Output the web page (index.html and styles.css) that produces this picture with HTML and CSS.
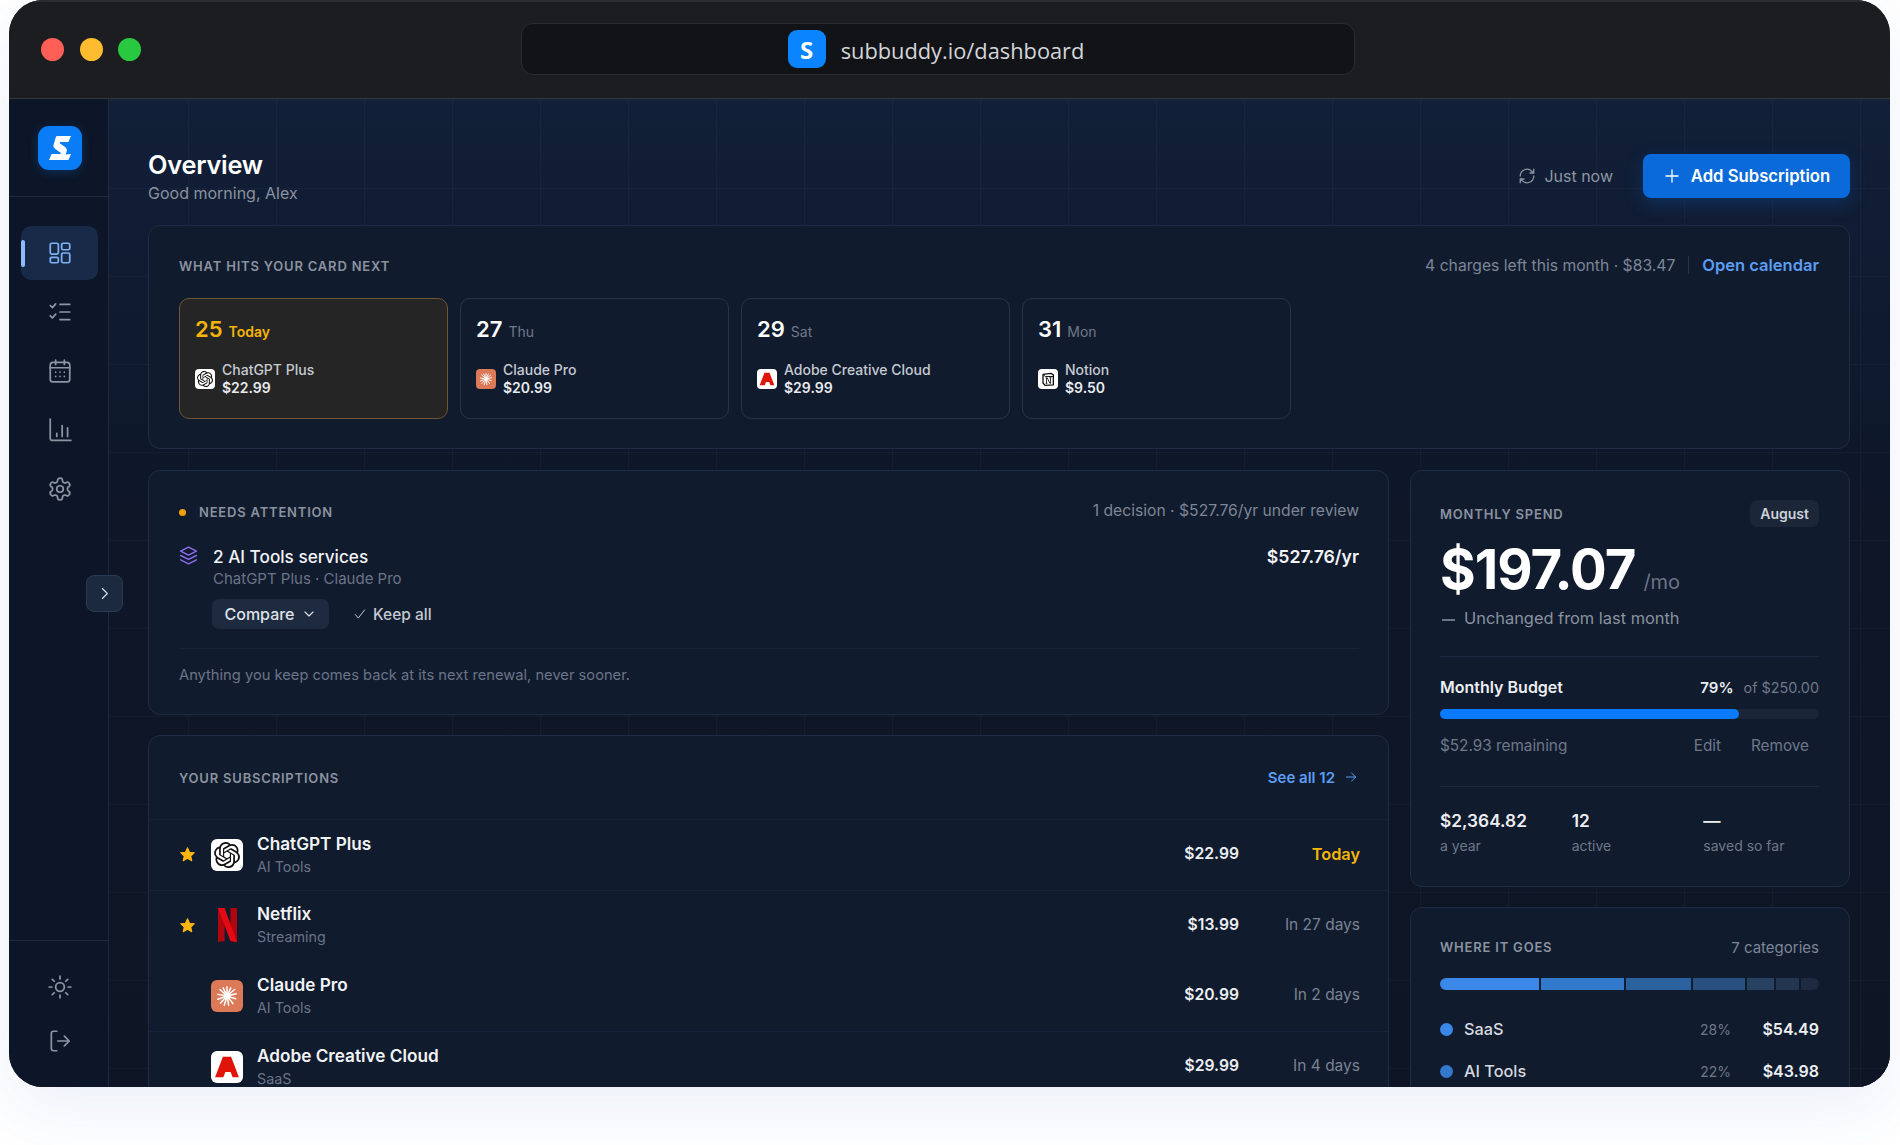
FILE: index.html
```html
<!DOCTYPE html>
<html lang="en">
<head>
  <meta charset="UTF-8" />
  <meta name="viewport" content="width=device-width, initial-scale=1" />
  <title>SubBuddy Dashboard</title>
  <link rel="stylesheet" href="styles.css">
</head>
<body>
  <!-- shared icons -->
  <svg class="defs" aria-hidden="true">
    <symbol id="i-openai" viewBox="0 0 24 24"><path fill="#111" d="M22.2819 9.8211a5.9847 5.9847 0 0 0-.5157-4.9108 6.0462 6.0462 0 0 0-6.5098-2.9A6.0651 6.0651 0 0 0 4.9807 4.1818a5.9847 5.9847 0 0 0-3.9977 2.9 6.0462 6.0462 0 0 0 .7427 7.0966 5.98 5.98 0 0 0 .511 4.9107 6.051 6.051 0 0 0 6.5146 2.9001A5.9847 5.9847 0 0 0 13.2599 24a6.0557 6.0557 0 0 0 5.7718-4.2058 5.9894 5.9894 0 0 0 3.9977-2.9001 6.0557 6.0557 0 0 0-.7475-7.0729zm-9.022 12.6081a4.4755 4.4755 0 0 1-2.8764-1.0408l.1419-.0804 4.7783-2.7582a.7948.7948 0 0 0 .3927-.6813v-6.7369l2.02 1.1686a.071.071 0 0 1 .038.052v5.5826a4.504 4.504 0 0 1-4.4945 4.4944zm-9.6607-4.1254a4.4708 4.4708 0 0 1-.5346-3.0137l.142.0852 4.783 2.7582a.7712.7712 0 0 0 .7806 0l5.8428-3.3685v2.3324a.0804.0804 0 0 1-.0332.0615L9.74 19.9502a4.4992 4.4992 0 0 1-6.1408-1.6464zM2.3408 7.8956a4.485 4.485 0 0 1 2.3655-1.9728V11.6a.7664.7664 0 0 0 .3879.6765l5.8144 3.3543-2.0201 1.1685a.0757.0757 0 0 1-.071 0l-4.8303-2.7865A4.504 4.504 0 0 1 2.3408 7.872zm16.5963 3.8558L13.1038 8.364 15.1192 7.2a.0757.0757 0 0 1 .071 0l4.8303 2.7913a4.4944 4.4944 0 0 1-.6765 8.1042v-5.6772a.79.79 0 0 0-.407-.667zm2.0107-3.0231l-.142-.0852-4.7735-2.7818a.7759.7759 0 0 0-.7854 0L9.409 9.2297V6.8974a.0662.0662 0 0 1 .0284-.0615l4.8303-2.7866a4.4992 4.4992 0 0 1 6.6802 4.66zM8.3065 12.863l-2.02-1.1638a.0804.0804 0 0 1-.038-.0567V6.0742a4.4992 4.4992 0 0 1 7.3757-3.4537l-.142.0805L8.704 5.459a.7948.7948 0 0 0-.3927.6813zm1.0976-2.3654l2.602-1.4998 2.6069 1.4998v2.9994l-2.5974 1.4997-2.6067-1.4997Z"/></symbol>
    <symbol id="i-claude" viewBox="0 0 24 24"><g stroke="#fff" stroke-width="1.4" stroke-linecap="round"><path d="M12 12 12 3.5M12 12 15.5 4.5M12 12 19 6M12 12 20.5 10M12 12 20 14.5M12 12 17.5 19M12 12 13.5 20.5M12 12 9.5 20.5M12 12 6 18.5M12 12 3.5 15M12 12 3.5 10.5M12 12 5.5 6M12 12 8.5 4.5"/></g></symbol>
    <symbol id="i-adobe" viewBox="0 0 24 24"><path fill="#e1140a" d="M8.2 2.500h7.600L23 21.500h-5.800l-1.900-5H9.900l2.700-5.500L8.600 21.500H1z"/></symbol>
    <symbol id="i-notion" viewBox="0 0 24 24"><path d="M4.500 5 16.500 3.500l3.500 2.200v15l-12.500.8-3-3.500z" fill="#fff" stroke="#111" stroke-width="2" stroke-linejoin="round"/><path d="M5 5.500 8 8.300h12" fill="none" stroke="#111" stroke-width="1.500"/><path d="M9.800 18.500v-8h1.200l3.800 8h1V10M8.500 10.500h2.500M8.500 18.500h2.600M14.200 10h2.800" fill="none" stroke="#111" stroke-width="1.300"/></symbol>
    <symbol id="i-netflix" viewBox="0 0 19 34"><path fill="#b0060f" d="M0 0h6.600v33L0 34zM12.400 0H19v34l-6.600-1z"/><path fill="#e50914" d="M0 0h6.600L19 34l-6.600-1z"/></symbol>
    <symbol id="i-star" viewBox="0 0 24 24"><path fill="#fdb50f" stroke="#fdb50f" stroke-width="1.500" stroke-linejoin="round" d="m12 2.500 2.900 6.200 6.700.8-5 4.600 1.400 6.700-6-3.400-6 3.400 1.400-6.700-5-4.600 6.700-.8z"/></symbol>
  </svg>

  <div class="window">
    <header class="titlebar">
      <div class="lights">
        <span class="light red"></span>
        <span class="light yellow"></span>
        <span class="light green"></span>
      </div>
      <div class="address">
        <span class="favicon">S</span>
        <span class="url">subbuddy.io/dashboard</span>
      </div>
    </header>

    <div class="app">
      <aside class="sidebar">
        <div class="brand">
          <div class="logo">
            <svg viewBox="0 0 44 44" width="44" height="44"><path fill="#fff" d="M19 10h14l-2.600 6H22.500c-1 0-1.200 1-.4 1.600l5 3.400c2 1.400 2.200 3.300 1.200 5.700l-.8 1.800L33 28l-2.500 6H11l2.600-6h8.300c1 0 1.300-1 .4-1.600l-5-3.500c-2-1.400-2.400-3.200-1.400-5.500l.7-1.800C17.400 12 17.800 10.600 19 10z"/></svg>
          </div>
        </div>
        <nav class="nav">
          <a class="nav-item active">
            <svg class="ico" viewBox="0 0 24 24"><rect x="3" y="3" width="7.500" height="10" rx="1.500"/><rect x="13.500" y="3" width="7.500" height="6" rx="1.500"/><rect x="3" y="16" width="7.500" height="5" rx="1.500"/><rect x="13.500" y="12" width="7.500" height="9" rx="1.500"/></svg>
          </a>
          <a class="nav-item">
            <svg class="ico" viewBox="0 0 24 24"><path d="m3 6 2 2 3-3.500M3 15.500l2 2 3-3.500M12 5h9M12 12h9M12 19h9"/></svg>
          </a>
          <a class="nav-item">
            <svg class="ico" viewBox="0 0 24 24"><rect x="3" y="4" width="18" height="18" rx="2.500"/><path d="M3 9h18M8 2v4M16 2v4M8 13h.01M12 13h.01M16 13h.01M8 17h.01M12 17h.01M16 17h.01"/></svg>
          </a>
          <a class="nav-item">
            <svg class="ico" viewBox="0 0 24 24"><path d="M3 2v18a1.500 1.500 0 0 0 1.500 1.500H22M9 18v-3M14 18V8M19 18v-8"/></svg>
          </a>
          <a class="nav-item">
            <svg class="ico" viewBox="0 0 24 24"><path d="M12.220 2h-.44a2 2 0 0 0-2 2v.18a2 2 0 0 1-1 1.730l-.43.25a2 2 0 0 1-2 0l-.15-.08a2 2 0 0 0-2.730.73l-.22.38a2 2 0 0 0 .73 2.730l.15.1a2 2 0 0 1 1 1.720v.51a2 2 0 0 1-1 1.740l-.15.09a2 2 0 0 0-.73 2.730l.22.38a2 2 0 0 0 2.730.73l.15-.08a2 2 0 0 1 2 0l.43.25a2 2 0 0 1 1 1.730V20a2 2 0 0 0 2 2h.44a2 2 0 0 0 2-2v-.18a2 2 0 0 1 1-1.730l.43-.25a2 2 0 0 1 2 0l.15.08a2 2 0 0 0 2.730-.73l.22-.39a2 2 0 0 0-.73-2.730l-.15-.08a2 2 0 0 1-1-1.740v-.5a2 2 0 0 1 1-1.740l.15-.09a2 2 0 0 0 .73-2.730l-.22-.38a2 2 0 0 0-2.730-.73l-.15.08a2 2 0 0 1-2 0l-.43-.25a2 2 0 0 1-1-1.730V4a2 2 0 0 0-2-2z"/><circle cx="12" cy="12" r="3"/></svg>
          </a>
        </nav>
        <div class="side-foot">
          <a class="nav-item">
            <svg class="ico" viewBox="0 0 24 24"><circle cx="12" cy="12" r="4"/><path d="M12 2v2.500M12 19.500V22M4.900 4.900l1.800 1.800M17.300 17.300l1.800 1.800M2 12h2.500M19.500 12H22M4.900 19.100l1.800-1.800M17.300 6.700l1.800-1.800"/></svg>
          </a>
          <a class="nav-item">
            <svg class="ico" viewBox="0 0 24 24"><path d="M9 21H6a2 2 0 0 1-2-2V5a2 2 0 0 1 2-2h3M16 16.500l4.500-4.500L16 7.500M20.500 12H10"/></svg>
          </a>
        </div>
      </aside>

      <main class="main">
        <div class="page-head">
          <div>
            <h1>Overview</h1>
            <p class="greeting">Good morning, Alex</p>
          </div>
          <div class="head-actions">
            <span class="synced">
              <svg class="ico small" viewBox="0 0 24 24"><path d="M3 12a9 9 0 0 1 15.500-6.200L21 8M21 3v5h-5M21 12a9 9 0 0 1-15.500 6.200L3 16M3 21v-5h5"/></svg>
              Just now
            </span>
            <button class="btn-add">
              <svg class="ico plus" viewBox="0 0 24 24"><path d="M12 4v16M4 12h16"/></svg>
              Add Subscription
            </button>
          </div>
        </div>

        <section class="card upcoming">
          <div class="card-head">
            <span class="label">What hits your card next</span>
            <div class="head-right">
              <span>4 charges left this month · $83.47</span>
              <i class="vsep"></i>
              <a class="link">Open calendar</a>
            </div>
          </div>
          <div class="strip">
            <div class="charge today">
              <div class="charge-date"><b>25</b><span>Today</span></div>
              <div class="charge-row">
                <span class="tile sm white"><svg><use href="#i-openai"/></svg></span>
                <div><p>ChatGPT Plus</p><strong>$22.99</strong></div>
              </div>
            </div>
            <div class="charge">
              <div class="charge-date"><b>27</b><span>Thu</span></div>
              <div class="charge-row">
                <span class="tile sm orange"><svg><use href="#i-claude"/></svg></span>
                <div><p>Claude Pro</p><strong>$20.99</strong></div>
              </div>
            </div>
            <div class="charge">
              <div class="charge-date"><b>29</b><span>Sat</span></div>
              <div class="charge-row">
                <span class="tile sm white"><svg><use href="#i-adobe"/></svg></span>
                <div><p>Adobe Creative Cloud</p><strong>$29.99</strong></div>
              </div>
            </div>
            <div class="charge">
              <div class="charge-date"><b>31</b><span>Mon</span></div>
              <div class="charge-row">
                <span class="tile sm white"><svg><use href="#i-notion"/></svg></span>
                <div><p>Notion</p><strong>$9.50</strong></div>
              </div>
            </div>
          </div>
        </section>

        <div class="columns">
          <div class="col">
            <section class="card attention">
              <div class="card-head">
                <span class="label"><i class="dot"></i>Needs attention</span>
                <div class="head-right"><span>1 decision · $527.76/yr under review</span></div>
              </div>
              <div class="review">
                <svg class="ico layers" viewBox="0 0 24 24"><path d="M12 2.500 3 7l9 4.500L21 7zM3 12l9 4.500 9-4.500M3 17l9 4.500 9-4.500"/></svg>
                <div class="review-body">
                  <div class="review-top">
                    <h3>2 AI Tools services</h3>
                    <strong>$527.76/yr</strong>
                  </div>
                  <p class="muted">ChatGPT Plus · Claude Pro</p>
                  <div class="review-actions">
                    <button class="btn-compare">Compare
                      <svg class="ico tiny" viewBox="0 0 24 24"><path d="m6 9 6 6 6-6"/></svg>
                    </button>
                    <button class="btn-keep">
                      <svg class="ico tiny check" viewBox="0 0 24 24"><path d="M4 13l5 6L20 5"/></svg>
                      Keep all
                    </button>
                  </div>
                </div>
              </div>
              <p class="note">Anything you keep comes back at its next renewal, never sooner.</p>
            </section>

            <section class="card subs">
              <div class="card-head">
                <span class="label">Your subscriptions</span>
                <a class="link see-all">See all 12
                  <svg class="ico tiny" viewBox="0 0 24 24"><path d="M4 12h16M13 5l7 7-7 7"/></svg>
                </a>
              </div>
              <div class="sub-row">
                <span class="star"><svg><use href="#i-star"/></svg></span>
                <span class="tile lg white"><svg><use href="#i-openai"/></svg></span>
                <div class="sub-name"><h4>ChatGPT Plus</h4><p>AI Tools</p></div>
                <strong class="sub-price">$22.99</strong>
                <span class="sub-when due">Today</span>
              </div>
              <div class="sub-row">
                <span class="star"><svg><use href="#i-star"/></svg></span>
                <span class="tile lg"><svg class="netflix"><use href="#i-netflix"/></svg></span>
                <div class="sub-name"><h4>Netflix</h4><p>Streaming</p></div>
                <strong class="sub-price">$13.99</strong>
                <span class="sub-when">In 27 days</span>
              </div>
              <div class="sub-row plain">
                <span class="star"></span>
                <span class="tile lg orange"><svg><use href="#i-claude"/></svg></span>
                <div class="sub-name"><h4>Claude Pro</h4><p>AI Tools</p></div>
                <strong class="sub-price">$20.99</strong>
                <span class="sub-when">In 2 days</span>
              </div>
              <div class="sub-row">
                <span class="star"></span>
                <span class="tile lg white"><svg><use href="#i-adobe"/></svg></span>
                <div class="sub-name"><h4>Adobe Creative Cloud</h4><p>SaaS</p></div>
                <strong class="sub-price">$29.99</strong>
                <span class="sub-when">In 4 days</span>
              </div>
            </section>
          </div>

          <div class="col">
            <section class="card spend">
              <div class="spend-head">
                <span class="label">Monthly spend</span>
                <span class="pill">August</span>
              </div>
              <div class="amount"><b>$197.07</b><span>/mo</span></div>
              <p class="change"><i></i>Unchanged from last month</p>
              <div class="budget">
                <div class="budget-top">
                  <strong>Monthly Budget</strong>
                  <span><b>79%</b> of $250.00</span>
                </div>
                <div class="track"><div class="fill" style="width: 79%"></div></div>
                <div class="budget-foot">
                  <span>$52.93 remaining</span>
                  <span class="budget-links"><a>Edit</a><a>Remove</a></span>
                </div>
              </div>
              <div class="stats">
                <div><b>$2,364.82</b><span>a year</span></div>
                <div><b>12</b><span>active</span></div>
                <div><b>—</b><span>saved so far</span></div>
              </div>
            </section>

            <section class="card where">
              <div class="where-head">
                <span class="label">Where it goes</span>
                <span class="count">7 categories</span>
              </div>
              <div class="stack">
                <i style="width: 99px; background: #3a88e8"></i>
                <i style="width: 83px; background: #307ac9"></i>
                <i style="width: 66px; background: #2a62a0"></i>
                <i style="width: 52px; background: #274f80"></i>
                <i style="width: 27px; background: #264162"></i>
                <i style="width: 23px; background: #22374f"></i>
                <i style="width: 18px; background: #1d2b40"></i>
              </div>
              <div class="legend">
                <div class="legend-row">
                  <i style="background: #3a88e8"></i><span class="legend-name">SaaS</span><span class="legend-pct">28%</span><strong>$54.49</strong>
                </div>
                <div class="legend-row">
                  <i style="background: #3478cc"></i><span class="legend-name">AI Tools</span><span class="legend-pct">22%</span><strong>$43.98</strong>
                </div>
              </div>
            </section>
          </div>
        </div>
      </main>
    </div>

    <button class="collapse">
      <svg class="ico tiny" viewBox="0 0 24 24"><path d="m9 5 7 7-7 7"/></svg>
    </button>
  </div>
</body>
</html>
```

FILE: styles.css
```css
* {
  box-sizing: border-box;
}
html, body {
  margin: 0;
  height: 1145px;
  overflow: hidden;
}
body {
  background: #fff;
  font-family: Inter, "Liberation Sans", sans-serif;
  color: #e8ebf0;
  padding-left: 9px;
}
body::before {
  content: "";
  position: absolute;
  left: 9px;
  top: 0;
  width: 1881px;
  height: 1087px;
  border-radius: 34px;
  box-shadow: 0 24px 60px rgba(60, 100, 200, 0.09);
}
h1, h3, h4, p {
  margin: 0;
}
a {
  cursor: pointer;
}
button {
  font-family: inherit;
  border: none;
  cursor: pointer;
}
.defs {
  position: absolute;
  width: 0;
  height: 0;
}

/* window */
.window {
  position: relative;
  width: 1881px;
  height: 1087px;
  border-radius: 34px;
  overflow: hidden;
  background: #0d1526;
}
.titlebar {
  position: relative;
  height: 99px;
  display: flex;
  align-items: center;
  padding-left: 32px;
  background: #1c1d20;
  border-top: 2px solid #2b2c2f;
  border-bottom: 1px solid #34363a;
}
.lights {
  display: flex;
  gap: 15.5px;
  margin-top: -1px;
}
.light {
  width: 23px;
  height: 23px;
  border-radius: 50%;
}
.red { background: #ff5f57; }
.yellow { background: #febc2e; }
.green { background: #28c840; }
.address {
  width: 834px;
  height: 52px;
  margin-left: 380px;
  margin-top: -2px;
  padding-right: 4px;
  display: flex;
  align-items: center;
  justify-content: center;
  gap: 15px;
  background: #121316;
  border: 1px solid #2b2c30;
  border-radius: 12px;
}
.favicon {
  width: 38px;
  height: 38px;
  border-radius: 9px;
  background: #0a84ff;
  color: #fff;
  font-family: "Open Sans", sans-serif;
  font-weight: 700;
  font-size: 24px;
  display: flex;
  align-items: center;
  justify-content: center;
}
.url {
  font-family: "Open Sans", sans-serif;
  font-size: 21.8px;
  font-weight: 500;
  color: #d3d5d9;
  margin-top: 2px;
}

/* layout */
.app {
  display: flex;
  height: 988px;
}
.sidebar {
  width: 100px;
  flex-shrink: 0;
  display: flex;
  flex-direction: column;
  background: #0d1628;
  border-right: 1px solid #1f2a3f;
}
.brand {
  height: 98px;
  padding: 27px 0 0 29px;
  border-bottom: 1px solid #1f2a3f;
}
.logo {
  width: 44px;
  height: 44px;
  border-radius: 11px;
  background: #0a7cf5;
  box-shadow: 0 2px 10px rgba(10, 124, 245, 0.25);
}
.logo svg {
  display: block;
}
.nav {
  display: flex;
  flex-direction: column;
  gap: 4.9px;
  margin-top: 29px;
  padding-left: 12px;
}
.nav-item {
  position: relative;
  width: 77px;
  height: 54px;
  display: flex;
  align-items: center;
  justify-content: center;
  border-radius: 10px;
  color: #8d95a3;
}
.nav-item .ico {
  width: 26px;
  height: 26px;
  stroke-width: 1.6;
}
.nav-item.active {
  background: #182a47;
  color: #7fb2f5;
}
.nav-item.active::before {
  content: "";
  position: absolute;
  left: 0;
  top: 14px;
  width: 4px;
  height: 27px;
  border-radius: 2px;
  background: #8cbcff;
}
.side-foot {
  margin-top: auto;
  padding: 19px 0 19px 12px;
  border-top: 1px solid #1f2a3f;
}
.ico {
  width: 24px;
  height: 24px;
  fill: none;
  stroke: currentColor;
  stroke-width: 1.7;
  stroke-linecap: round;
  stroke-linejoin: round;
}
.ico.small {
  width: 18px;
  height: 18px;
}
.ico.tiny {
  width: 14px;
  height: 14px;
}
.collapse {
  position: absolute;
  left: 77px;
  top: 575px;
  width: 37px;
  height: 37px;
  padding: 0;
  display: flex;
  align-items: center;
  justify-content: center;
  border-radius: 8px;
  background: #1c2a40;
  border: 1px solid #2a3a52;
  color: #d5dae2;
}
.collapse .ico.tiny {
  width: 17px;
  height: 17px;
}

/* main */
.main {
  flex: 1;
  padding: 47px 40px 0 39px;
  overflow: hidden;
  background-color: #0f192c;
  background-image:
    linear-gradient(rgba(255, 255, 255, 0.028) 1px, transparent 1px),
    linear-gradient(90deg, rgba(255, 255, 255, 0.028) 1px, transparent 1px),
    linear-gradient(180deg, #111f38 0, #0e1627 45%, #0e1626 100%);
  background-size: 88px 88px, 88px 88px, 100% 100%;
  background-position: -9px 1px, -9px 1px, 0 0;
}
.page-head {
  height: 60px;
  margin-bottom: 19px;
  display: flex;
  align-items: center;
  justify-content: space-between;
}
h1 {
  font-size: 25.3px;
  font-weight: 600;
  line-height: 32px;
  color: #fff;
  letter-spacing: -0.2px;
}
.greeting {
  font-size: 16px;
  line-height: 22px;
  margin-top: 1px;
  color: #8a929f;
}
.head-actions {
  display: flex;
  align-items: center;
  gap: 30px;
}
.synced {
  display: flex;
  align-items: center;
  gap: 8px;
  font-size: 16px;
  color: #8e95a1;
}
.btn-add {
  width: 207px;
  height: 44px;
  display: flex;
  align-items: center;
  justify-content: center;
  gap: 10px;
  background: #0b6ada;
  border-radius: 8px;
  color: #fff;
  font-size: 16.7px;
  font-weight: 600;
  box-shadow: 0 6px 18px rgba(11, 106, 218, 0.25);
}
.ico.plus {
  width: 18px;
  height: 18px;
}

/* cards */
.card {
  background: #101b2e;
  border: 1px solid #1f2c44;
  border-radius: 12px;
}
.card-head {
  display: flex;
  justify-content: space-between;
  align-items: center;
  height: 22px;
}
.label {
  display: flex;
  align-items: center;
  font-size: 13px;
  font-weight: 600;
  letter-spacing: 0.8px;
  text-transform: uppercase;
  color: #8a929f;
}
.upcoming .label {
  margin-top: -2px;
}
.subs .label {
  margin-top: 2px;
}
.head-right {
  display: flex;
  align-items: center;
  margin-top: -4px;
  font-size: 15.7px;
  color: #7d8696;
}
.vsep {
  width: 1px;
  height: 18px;
  margin: 0 13px;
  background: #2b3548;
}
.link {
  color: #5c9df2;
  font-size: 15px;
  font-weight: 600;
}
.head-right .link {
  font-size: 16.5px;
}
.upcoming {
  height: 224px;
  padding: 30px 30px 0;
}
.strip {
  display: flex;
  gap: 12px;
  margin-top: 20px;
}
.charge {
  width: 269px;
  height: 121px;
  padding: 17px 15px;
  border: 1px solid #2a3446;
  border-radius: 10px;
}
.charge.today {
  background: #252525;
  border-color: #6f5530;
}
.charge-date {
  display: flex;
  align-items: baseline;
  gap: 6px;
  height: 30px;
  font-size: 14px;
  color: #6f7888;
}
.charge-date b {
  font-size: 22px;
  font-weight: 600;
  color: #fff;
}
.today .charge-date, .today .charge-date b {
  color: #f5b50a;
  font-weight: 600;
}
.charge-row {
  display: flex;
  align-items: center;
  gap: 7px;
  margin-top: 15px;
}
.charge-row p {
  font-size: 14px;
  font-weight: 500;
  line-height: 18px;
  color: #c6cad1;
}
.charge-row strong {
  display: block;
  font-size: 14px;
  font-weight: 600;
  line-height: 18px;
  color: #e8eaee;
}
.tile {
  flex-shrink: 0;
  display: flex;
  align-items: center;
  justify-content: center;
  border-radius: 4px;
}
.tile.sm {
  width: 20px;
  height: 20px;
}
.tile.sm svg {
  width: 16px;
  height: 16px;
}
.tile.lg {
  width: 32px;
  height: 32px;
  border-radius: 6px;
}
.tile.lg svg {
  width: 26px;
  height: 26px;
}
.tile.lg svg.netflix {
  width: 19px;
  height: 34px;
}
.white { background: #fff; }
.orange { background: #dc7a58; }

/* two columns */
.columns {
  display: grid;
  grid-template-columns: 1fr 440px;
  gap: 21px;
  align-items: start;
  margin-top: 21px;
}
.col {
  display: flex;
  flex-direction: column;
  gap: 20px;
}

/* attention */
.attention {
  height: 245px;
  padding: 30px 29px 0 30px;
}
.dot {
  width: 7px;
  height: 7px;
  margin-right: 13px;
  border-radius: 50%;
  background: #f59e0b;
}
.review {
  display: flex;
  margin-top: 20px;
}
.ico.layers {
  width: 21px;
  height: 21px;
  margin: 2px 13px 0 -1px;
  color: #8b6cf0;
  flex-shrink: 0;
}
.review-body {
  flex: 1;
}
.review-top {
  display: flex;
  justify-content: space-between;
  align-items: center;
  height: 26px;
}
.review-top h3 {
  font-size: 17.2px;
  font-weight: 500;
  color: #f2f3f5;
  margin-left: 1px;
}
.review-top strong {
  font-size: 17.7px;
  font-weight: 600;
  color: #f2f3f5;
}
.muted {
  font-size: 15px;
  line-height: 20px;
  margin-left: 1px;
  color: #6b7486;
}
.review-actions {
  display: flex;
  align-items: center;
  gap: 24px;
  margin-top: 10px;
}
.btn-compare {
  width: 117px;
  height: 30px;
  display: flex;
  align-items: center;
  justify-content: center;
  gap: 6px;
  border-radius: 7px;
  background: #1e2a3f;
  color: #dfe2e7;
  font-size: 16px;
  font-weight: 500;
}
.btn-compare .ico.tiny {
  width: 16px;
  height: 16px;
}
.btn-keep {
  display: flex;
  align-items: center;
  gap: 6px;
  padding: 0;
  background: none;
  color: #c4c8cf;
  font-size: 15.5px;
  font-weight: 500;
}
.note {
  margin-top: 19px;
  padding-top: 15px;
  border-top: 1px solid #18243a;
  font-size: 14.7px;
  line-height: 22px;
  color: #6b7486;
}

/* subscriptions */
.subs {
  padding-top: 30px;
  height: 420px;
}
.subs .card-head {
  padding: 0 30px 0 30px;
  margin-bottom: 31px;
}
.see-all {
  display: flex;
  align-items: center;
  gap: 9px;
}
.sub-row {
  height: 70.6px;
  display: flex;
  align-items: center;
  padding: 0 28px 0 30px;
  border-top: 1px solid #16223a;
}
.sub-row.plain {
  border-top-color: transparent;
}
.star {
  width: 32px;
  flex-shrink: 0;
}
.star svg {
  display: block;
  width: 17px;
  height: 17px;
}
.sub-name {
  margin-left: 14px;
  flex: 1;
}
.sub-name h4 {
  font-size: 17.2px;
  font-weight: 600;
  line-height: 23px;
  margin-top: -1px;
  color: #f2f3f5;
}
.sub-name p {
  margin-top: 2px;
  font-size: 14.3px;
  line-height: 20px;
  color: #6b7486;
}
.sub-price {
  margin-top: -2px;
  font-size: 15.7px;
  font-weight: 600;
  color: #eceef1;
}
.sub-when {
  width: 121px;
  margin-top: -2px;
  text-align: right;
  font-size: 15.5px;
  color: #7a8394;
}
.sub-when.due {
  font-size: 16.3px;
  color: #f5b50a;
  font-weight: 600;
}

/* spend */
.spend {
  height: 417px;
  padding: 29px 30px 0 29px;
}
.spend-head, .where-head, .budget-top, .budget-foot {
  display: flex;
  justify-content: space-between;
  align-items: center;
}
.pill {
  height: 27px;
  padding: 0 10px;
  display: flex;
  align-items: center;
  border-radius: 7px;
  background: #1b2638;
  color: #cdd1d8;
  font-size: 14px;
  font-weight: 600;
}
.amount {
  display: flex;
  align-items: baseline;
  gap: 8px;
  height: 60px;
  margin-top: 12px;
  line-height: 60px;
}
.amount b {
  font-size: 54.5px;
  font-weight: 700;
  color: #fff;
  letter-spacing: -1px;
}
.amount span {
  font-size: 20px;
  color: #6b7486;
}
.change {
  display: flex;
  align-items: center;
  margin-top: 7px;
  font-size: 16.4px;
  line-height: 24px;
  color: #8a929f;
}
.change i {
  width: 13px;
  height: 2px;
  margin: 3px 9px 0 2px;
  background: #6b7486;
}
.budget {
  margin-top: 26px;
  padding: 18px 0 30px;
  border-top: 1px solid #1c2840;
  border-bottom: 1px solid #1c2840;
}
.budget-top {
  height: 24px;
  font-size: 14.4px;
}
.budget-top strong {
  font-size: 16px;
  font-weight: 600;
  color: #eceef1;
}
.budget-top span {
  color: #6f7888;
}
.budget-top b {
  margin-right: 6px;
  font-size: 15px;
  font-weight: 600;
  color: #eceef1;
}
.track {
  height: 10px;
  margin-top: 10px;
  border-radius: 5px;
  background: #1a2538;
}
.fill {
  height: 100%;
  border-radius: 5px;
  background: #0a7aff;
}
.budget-foot {
  height: 22px;
  margin-top: 15px;
  font-size: 15.3px;
  color: #6f7888;
}
.budget-links {
  display: flex;
  gap: 30px;
  padding-right: 10px;
}
.stats {
  display: grid;
  grid-template-columns: repeat(3, 1fr);
  gap: 16px;
  padding-top: 22px;
}
.stats b {
  display: block;
  font-size: 17.3px;
  font-weight: 600;
  line-height: 24px;
  color: #eceef1;
}
.stats span {
  display: block;
  margin-top: 3px;
  font-size: 14px;
  line-height: 20px;
  color: #6f7888;
}

/* where it goes */
.where {
  height: 260px;
  padding: 28px 30px 0 29px;
}
.where-head {
  height: 22px;
}
.count {
  font-size: 15px;
  color: #7d8696;
}
.stack {
  display: flex;
  gap: 2px;
  height: 12px;
  margin-top: 20px;
  border-radius: 6px;
  overflow: hidden;
}
.stack i {
  display: block;
  height: 100%;
}
.legend {
  display: flex;
  flex-direction: column;
  gap: 18px;
  margin-top: 27px;
}
.legend-row {
  display: flex;
  align-items: center;
  height: 24px;
}
.legend-row i {
  width: 13px;
  height: 13px;
  margin-right: 11px;
  border-radius: 50%;
}
.legend-name {
  flex: 1;
  font-size: 16.3px;
  font-weight: 500;
  color: #d5d8de;
}
.legend-pct {
  font-size: 14px;
  color: #6f7888;
}
.legend-row strong {
  width: 88px;
  text-align: right;
  font-size: 16px;
  font-weight: 600;
  color: #eceef1;
}
```
